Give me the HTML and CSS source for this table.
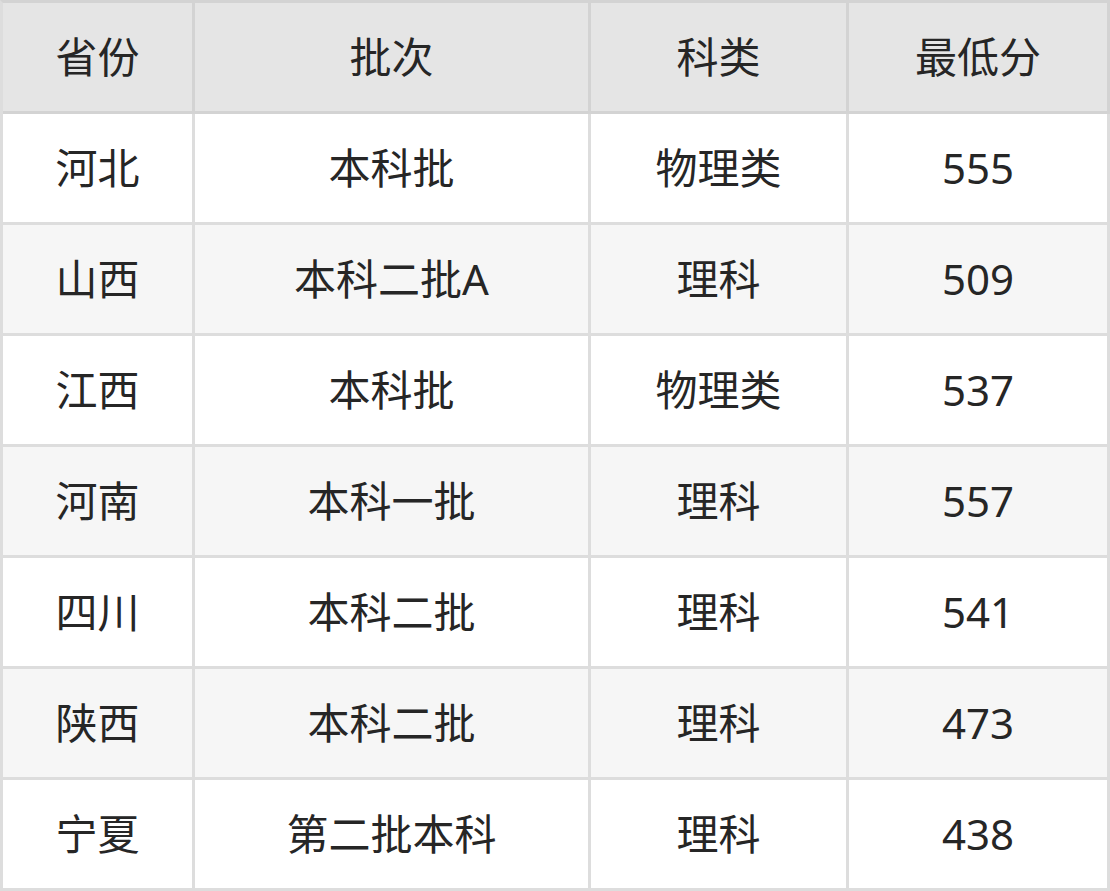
FILE: index.html
```html
<!DOCTYPE html>
<html lang="zh-CN">
<head>
<meta charset="utf-8">
<link rel="stylesheet" href="styles.css">
</head>
<body>
<table class="score-table">
  <colgroup>
    <col class="c1"><col class="c2"><col class="c3"><col class="c4">
  </colgroup>
  <thead>
    <tr><th>省份</th><th>批次</th><th>科类</th><th>最低分</th></tr>
  </thead>
  <tbody>
    <tr><td>河北</td><td>本科批</td><td>物理类</td><td>555</td></tr>
    <tr><td>山西</td><td>本科二批A</td><td>理科</td><td>509</td></tr>
    <tr><td>江西</td><td>本科批</td><td>物理类</td><td>537</td></tr>
    <tr><td>河南</td><td>本科一批</td><td>理科</td><td>557</td></tr>
    <tr><td>四川</td><td>本科二批</td><td>理科</td><td>541</td></tr>
    <tr><td>陕西</td><td>本科二批</td><td>理科</td><td>473</td></tr>
    <tr><td>宁夏</td><td>第二批本科</td><td>理科</td><td>438</td></tr>
  </tbody>
</table>
</body>
</html>
```

FILE: styles.css
```css
html, body {
  margin: 0;
  padding: 0;
  background: #ffffff;
}
.score-table {
  width: 1110px;
  table-layout: fixed;
  border-collapse: separate;
  border-spacing: 0;
  border-left: 3px solid #dddddd;
  border-top: 3px solid #d3d3d3;
  font-family: "Noto Sans", "Noto Sans CJK SC", sans-serif;
  font-size: 42px;
  color: #262626;
}
.c1 { width: 192px; }
.c2 { width: 396px; }
.c3 { width: 258px; }
.c4 { width: 261px; }
.score-table th,
.score-table td {
  box-sizing: border-box;
  height: 111px;
  padding: 0;
  text-align: center;
  vertical-align: middle;
  border-right: 3px solid #dddddd;
  border-bottom: 3px solid #dddddd;
  font-weight: normal;
  line-height: 1;
}
.score-table th {
  background: #e5e5e5;
  border-color: #d3d3d3;
}
.score-table tbody tr:nth-child(even) td {
  background: #f6f6f6;
}
```
